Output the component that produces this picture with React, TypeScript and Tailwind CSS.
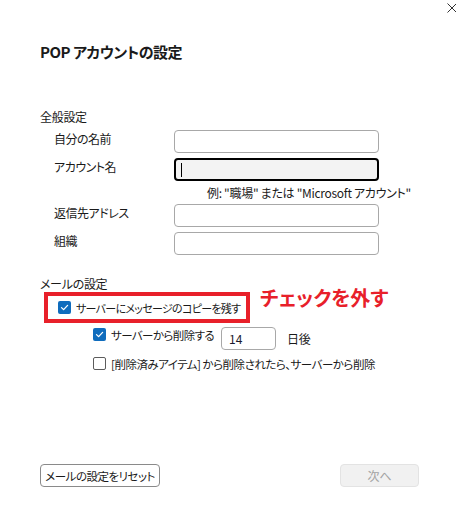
import React from 'react'

function CheckBox({ checked }: { checked: boolean }) {
  if (!checked) {
    return <span className="block w-[13px] h-[13px] shrink-0 rounded-[2px] border border-[#5c5c5c] bg-white" />
  }
  return (
    <span className="flex w-[13px] h-[13px] shrink-0 items-center justify-center rounded-[2px] bg-[#0f6cbd]">
      <svg width="9" height="9" viewBox="0 0 9 9" fill="none">
        <path d="M1.5 4.6 L3.6 6.6 L7.6 2.4" stroke="white" strokeWidth="1.3" strokeLinecap="round" strokeLinejoin="round" />
      </svg>
    </span>
  )
}

function Field({ label, focused }: { label: string; focused?: boolean }) {
  return (
    <div className="flex items-start">
      <div className="w-[134px] pl-[14px] text-[12px] leading-[18px] tracking-[-0.5px] text-[#1a1a1a]">{label}</div>
      {focused ? (
        <div className="flex h-[23px] w-[205px] items-center rounded-[4px] border-2 border-black bg-[#f3f3f3] pl-[5px]">
          <span className="block h-[14px] w-px bg-black" />
        </div>
      ) : (
        <div className="h-[23px] w-[205px] rounded-[4px] border border-[#a8a8a8] bg-white" />
      )}
    </div>
  )
}

export default function App() {
  return (
    <div className="relative flex h-[528px] w-[456px] flex-col overflow-hidden bg-white pl-[40px] font-['Noto_Sans_CJK_JP',sans-serif] text-[#1a1a1a] [font-feature-settings:'palt']">
      {/* close */}
      <svg className="absolute left-[447px] top-[3px]" width="10" height="10" viewBox="0 0 10 10">
        <path d="M0.5 0.5 L9.5 9.5 M9.5 0.5 L0.5 9.5" stroke="#333" strokeWidth="1" />
      </svg>

      <h1 className="mt-[42px] text-[15px] font-bold leading-[20px] tracking-[-0.5px] text-[#1a1a1a]">POP アカウントの設定</h1>

      <div className="mt-[46px] text-[12px] leading-[18px] tracking-[-0.3px]">全般設定</div>

      <div className="mt-[4px] flex flex-col gap-[5px]">
        <Field label="自分の名前" />
        <Field label="アカウント名" focused />
      </div>
      <div className="mt-[4px] pl-[167px] text-[12px] leading-[16px] tracking-[-0.3px] text-[#1a1a1a]">
        例: &quot;職場&quot; または &quot;Microsoft アカウント&quot;
      </div>
      <div className="mt-[3px] flex flex-col gap-[5px]">
        <Field label="返信先アドレス" />
        <Field label="組織" />
      </div>

      <div className="mt-[21px] text-[12px] leading-[16px] tracking-[-0.3px]">メールの設定</div>

      <div className="flex items-start">
        <div className="ml-[4px] flex h-[31px] w-[206px] items-center gap-[5px] border-[4px] border-[#e8202a] pl-[10px]">
          <CheckBox checked />
          <span className="whitespace-nowrap text-[11px] leading-[16px] tracking-[-0.7px]">サーバーにメッセージのコピーを残す</span>
        </div>
        <div className="-mt-[6px] ml-[10px] whitespace-nowrap text-[20px] font-bold leading-[24px] text-[#e8202a]">チェックを外す</div>
      </div>

      <div className="ml-[53px] mt-[4px] flex items-start">
        <span className="mt-[1px]">
          <CheckBox checked />
        </span>
        <span className="ml-[5px] w-[110px] whitespace-nowrap text-[11.5px] leading-[16px] tracking-[-0.6px]">サーバーから削除する</span>
        <div className="flex h-[23px] w-[55px] items-center rounded-[4px] border border-[#a8a8a8] pl-[7px] text-[12px] text-[#1a1a2e]">14</div>
        <span className="ml-[11px] self-center text-[12px] leading-[16px] tracking-[-0.3px]">日後</span>
      </div>

      <div className="ml-[53px] mt-[7px] flex items-start">
        <CheckBox checked={false} />
        <span className="ml-[5px] whitespace-nowrap text-[11.5px] leading-[14px] tracking-[-0.5px]">[削除済みアイテム] から削除されたら、サーバーから削除</span>
      </div>

      <div className="mb-[41px] mt-auto flex items-center justify-between pr-[37px]">
        <button className="h-[23px] w-[120px] rounded-[4px] border border-[#8a8a8a] bg-white text-center text-[11.5px] leading-[16px] tracking-[-0.5px] text-[#1a1a1a]">
          メールの設定をリセット
        </button>
        <button className="h-[23px] w-[79px] rounded-[4px] border border-[#e3e3e3] bg-[#f1f1f1] text-[12px] leading-[16px] text-[#a3a3a3]">
          次へ
        </button>
      </div>
    </div>
  )
}
